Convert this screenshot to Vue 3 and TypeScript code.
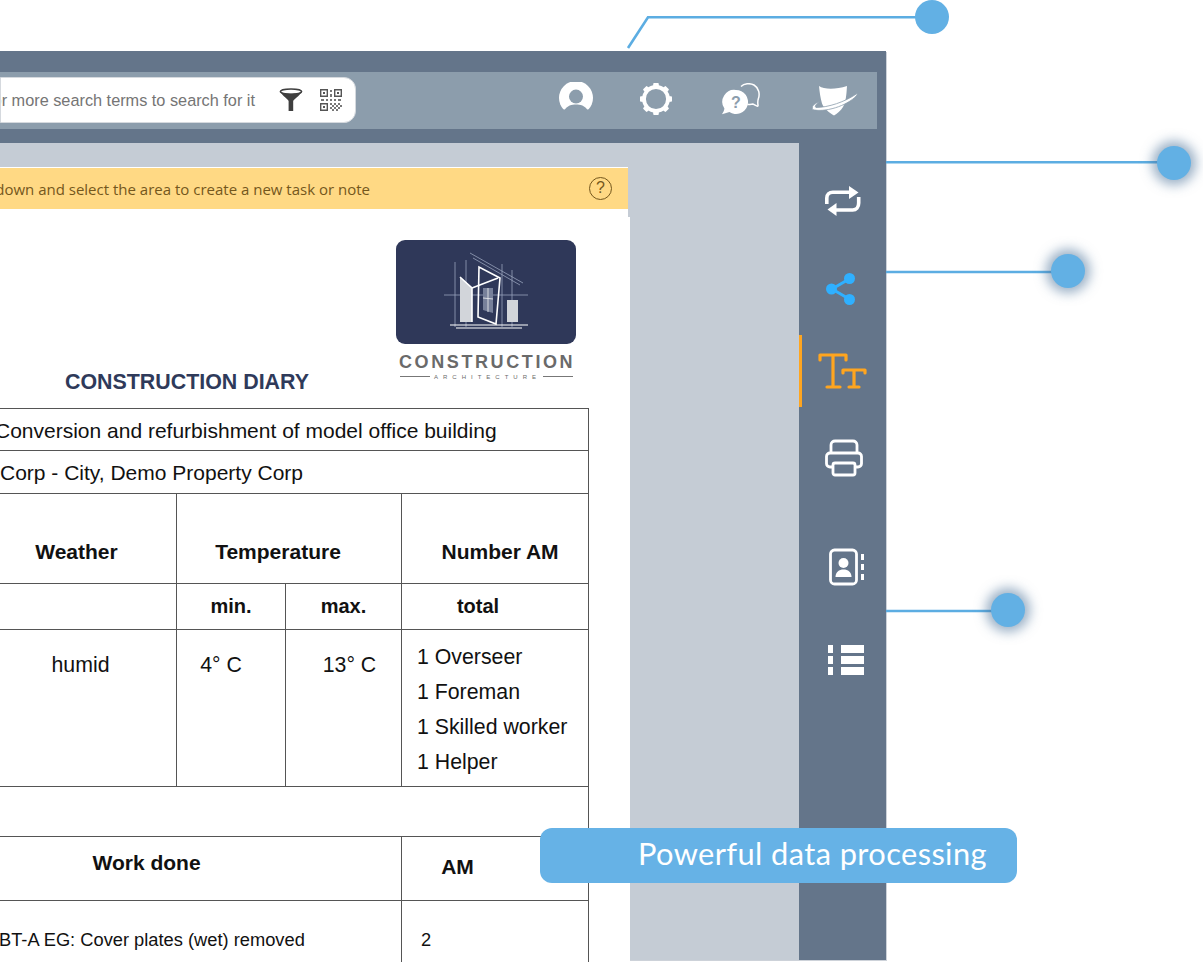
<template>
  <div class="page">
    <div class="frame">
      <header class="toolbar">
        <div class="search">
          <span class="search-text">or more search terms to search for it</span>
          <svg class="funnel" viewBox="0 0 24 24" width="24" height="24">
            <ellipse cx="12" cy="3.6" rx="10.6" ry="2.6" fill="none" stroke="#3f3f3f" stroke-width="1.6" />
            <path d="M1.6 4.6C4 8 8.4 11 9.6 13V23h4.6V13C15.6 11 20 8 22.4 4.6c-3 1.6-17.8 1.6-20.8 0z" fill="#3f3f3f" />
          </svg>
          <svg class="qr" viewBox="0 0 22 22" width="22" height="22">
            <path d="M0 0h8v8H0zM1.4 1.4v5.2h5.2V1.4zM14 0h8v8h-8zm1.4 1.4v5.2h5.2V1.4zM0 14h8v8H0zm1.4 1.4v5.2h5.2v-5.2z" fill="#555" fill-rule="evenodd" />
            <path d="M3 3h2v2H3zM17 3h2v2h-2zM3 17h2v2H3z" fill="#555" />
            <path d="M10 1h2v2h-2zM10 5h2v3h-2zM1 10h3v2H1zM6 10h2v2H6zM10 10h2v2h-2zM14 10h2v2h-2zM18 10h3v2h-3zM10 14h2v2h-2zM14 14h2v2h-2zM18 14h2v2h-2zM12 16h2v2h-2zM16 16h2v2h-2zM20 16h2v2h-2zM10 18h2v2h-2zM14 18h2v2h-2zM18 18h2v2h-2zM12 20h2v2h-2zM16 20h2v2h-2z" fill="#777" />
          </svg>
        </div>
        <div class="top-icons">
          <svg class="ic-user" viewBox="0 0 36 30" width="36" height="30">
            <defs>
              <clipPath id="userClip"><rect x="0" y="0" width="36" height="27.5" /></clipPath>
            </defs>
            <circle cx="18" cy="16" r="17" fill="#fff" clip-path="url(#userClip)" />
            <circle cx="18" cy="14.6" r="7" fill="#8c9dac" />
            <path d="M6 29c3-5.600 8-6.400 12-6.400S27 23.400 30 29z" fill="#8c9dac" />
          </svg>
          <svg class="ic-gear" viewBox="0 0 34 34" width="34" height="34">
            <circle cx="17" cy="17" r="12" fill="none" stroke="#fff" stroke-width="3.800" />
            <g fill="#fff">
              <rect v-for="a in gearTeeth" :key="a" x="14.200" y="1" width="5.600" height="5" rx="1" :transform="`rotate(${a} 17 17)`" />
            </g>
          </svg>
          <svg class="ic-chat" viewBox="0 0 40 32" width="40" height="32">
            <path d="M19 3.500C22 .6 28-.2 32 2c5 3 6 9 4.400 13.600-.6 1.800-1 3-.4 6.400 .2 1.200-.4 1.400-1.400 .8l-3.600-1.800c-2 .6-3.600 .6-5.600 .2" fill="none" stroke="#fff" stroke-width="1.500" />
            <path d="M14 7a12 12 0 1 1-6.600 22L0 31.200c1.200-1.800 2.200-3.600 2.400-5.600A12 12 0 0 1 14 7z" fill="#fff" />
            <text x="14" y="25" class="chat-q">?</text>
          </svg>
          <svg class="ic-shield" viewBox="0 0 48 32" width="48" height="32">
            <path d="M8 1c5 3.600 17 3.600 28 0-.6 9-1 16-4 21-2.400 3.800-6 6.600-9 8.600-4.400-2.600-10-6.600-12-12C9.400 13 8.600 7 8 1z" fill="#fff" />
            <path d="M5 22.500C17 22.500 34 17 46 8.500 48 10.400 34 22.500 14 25 6 26 0 25 1.500 23 .4 20.600 5 18 9 16.500 6 18.500 3 21 5 22.500z" fill="#fff" stroke="#8c9dac" stroke-width="0.800" />
          </svg>
        </div>
      </header>

      <div class="workspace">
        <main class="canvas">
          <div class="notice-wrap">
            <div class="notice">
              <span>down and select the area to create a new task or note</span>
              <i class="help">?</i>
            </div>
          </div>
          <section class="sheet">
            <div class="sheet-head">
              <h1>CONSTRUCTION DIARY</h1>
              <div class="logo">
                <div class="logo-box">
                  <svg viewBox="0 0 180 104" width="180" height="104">
                    <g stroke="#98a2bb" stroke-width="0.800" fill="none">
                      <path d="M74 13l53 30M77 18l47 27M70 20v67M59 22v65M106 24v63M116 30v57M48 55h84" />
                    </g>
                    <path d="M64 37l12 10v35H64zM111 60h11v22h-11z" fill="#d2d5da" />
                    <path d="M87 48h10v25l-10-3z" fill="#77809a" />
                    <path d="M87 58l10 1M92 48v24" stroke="#e3e5ea" stroke-width="0.900" />
                    <g stroke="#fff" fill="none" stroke-width="1.600">
                      <path d="M64 37l12 11v34" />
                      <path d="M83 27l-1 50 18 7 4-46-21-11z" />
                      <path d="M76 48l26-10" />
                    </g>
                    <path d="M54 85h78M60 88h66" stroke="#fff" stroke-width="1.200" />
                  </svg>
                </div>
                <div class="logo-name">CONSTRUCTION</div>
                <div class="logo-sub"><span>ARCHITECTURE</span></div>
              </div>
            </div>

            <table class="diary">
              <colgroup>
                <col style="width: 85px" />
                <col style="width: 200px" />
                <col style="width: 109px" />
                <col style="width: 116px" />
                <col style="width: 187px" />
              </colgroup>
              <tbody>
                <tr class="r-title">
                  <td colspan="5" class="project">Conversion and refurbishment of model office building</td>
                </tr>
                <tr class="r-title2">
                  <td colspan="5" class="project second">Corp - City, Demo Property Corp</td>
                </tr>
                <tr class="r-head">
                  <td class="no-right"></td>
                  <th>Weather</th>
                  <th colspan="2" class="temperature">Temperature</th>
                  <th class="number">Number AM</th>
                </tr>
                <tr class="r-sub">
                  <td class="no-right"></td>
                  <td></td>
                  <th>min.</th>
                  <th>max.</th>
                  <th class="total">total</th>
                </tr>
                <tr class="r-data">
                  <td class="no-right"></td>
                  <td class="humid">humid</td>
                  <td class="temp-min">4° C</td>
                  <td class="temp-max">13° C</td>
                  <td class="crew">
                    <div v-for="w in crew" :key="w">1 {{ w }}</div>
                  </td>
                </tr>
                <tr class="r-gap"><td colspan="5"></td></tr>
                <tr class="r-work">
                  <th colspan="4" class="work">Work done</th>
                  <th class="am">AM</th>
                </tr>
                <tr class="r-item">
                  <td colspan="4" class="item">BT-A EG: Cover plates (wet) removed</td>
                  <td class="qty">2</td>
                </tr>
              </tbody>
            </table>
          </section>
        </main>

        <aside class="sidebar">
          <button class="tool t-repeat">
            <svg viewBox="0 0 36 30" width="36" height="30" fill="none" stroke="#fff" stroke-width="3.600">
              <path d="M1.800 18v-6c0-3.500 2.500-5.800 6-5.800H26" />
              <path d="M33.700 11v6c0 4-2.500 7-6 7H10" />
              <path d="M24 0l9.500 6.500L24 13z" fill="#fff" stroke="none" />
              <path d="M11.500 17L2.500 23.500 11.500 30z" fill="#fff" stroke="none" />
            </svg>
          </button>
          <button class="tool t-share">
            <svg viewBox="0 0 30 32" width="30" height="32">
              <path d="M6 16L24 5.500M6 16l18 10.500" stroke="#2fb0ff" stroke-width="3" />
              <circle cx="5.500" cy="16" r="5.500" fill="#2fb0ff" />
              <circle cx="23.500" cy="5.500" r="5.500" fill="#2fb0ff" />
              <circle cx="23.500" cy="26.500" r="5.500" fill="#2fb0ff" />
            </svg>
          </button>
          <button class="tool t-text active">
            <svg viewBox="0 0 50 36" width="50" height="36" fill="none" stroke="#ffa51f" stroke-width="3.200" stroke-linecap="round" stroke-linejoin="round">
              <path d="M2 7V2h26v5M15 2v32M9 34h13" />
              <path d="M25 20v-3h22v3M36 17v17M31 34h10" />
            </svg>
          </button>
          <button class="tool t-print">
            <svg viewBox="0 0 38 38" width="38" height="38" fill="none" stroke="#fff" stroke-width="2.800" stroke-linejoin="round">
              <path d="M6 14V6c0-2.500 2-4 4-4h18c2 0 4 1.500 4 4v8" />
              <path d="M9 28H5c-2 0-3.500-1.500-3.500-3.500v-7C1.500 15.500 3 14 5 14h28c2 0 3.500 1.500 3.500 3.500v7c0 2-1.500 3.500-3.500 3.500h-4" />
              <rect x="8" y="24" width="22" height="12" rx="2" />
            </svg>
          </button>
          <button class="tool t-contact">
            <svg viewBox="0 0 36 38" width="36" height="38">
              <rect x="1.500" y="2" width="26" height="34" rx="4" fill="none" stroke="#fff" stroke-width="2.800" />
              <circle cx="14.500" cy="15" r="5" fill="#fff" />
              <path d="M6.500 29c0-5 3.500-7.500 8-7.500s8 2.500 8 7.500z" fill="#fff" />
              <path d="M32 6h3v6h-3zM32 16h3v6h-3zM32 26h3v6h-3z" fill="#fff" />
            </svg>
          </button>
          <button class="tool t-list">
            <svg viewBox="0 0 36 30" width="36" height="30" fill="#fff">
              <path d="M0 0h5v8H0zM0 11h5v8H0zM0 22h5v8H0zM13 0h23v8H13zM13 11h23v8H13zM13 22h23v8H13z" />
            </svg>
          </button>
        </aside>
      </div>
    </div>

    <!-- callout lines -->
    <svg class="leaders" width="1203" height="962" fill="none" stroke="#5cade2" stroke-width="2.600">
      <path d="M628 48L648 17.300H920" />
      <path d="M886 162.300H1160" />
      <path d="M886 272H1055" />
      <path d="M886 611H995" />
    </svg>
    <span class="dot d1"></span>
    <span class="dot glow d2"></span>
    <span class="dot glow d3"></span>
    <span class="dot glow d4"></span>
    <div class="banner">Powerful data processing</div>
  </div>
</template>

<script setup lang="ts">
const gearTeeth: number[] = [0, 45, 90, 135, 180, 225, 270, 315];
const crew: string[] = ['Overseer', 'Foreman', 'Skilled worker', 'Helper'];
</script>

<style>
html,
body {
  margin: 0;
  background: #fff;
}
</style>

<style scoped>
.page {
  position: relative;
  box-sizing: border-box;
  width: 1203px;
  height: 962px;
  padding-top: 51px;
  overflow: hidden;
  background: #fff;
  font-family: "Liberation Sans", Arial, sans-serif;
}

.frame {
  box-sizing: border-box;
  width: 886px;
  height: 909px;
  padding-top: 21px;
  background: #64758a;
  box-shadow: 1px 1px 0 #cdd2d9;
}

.toolbar {
  display: flex;
  align-items: center;
  justify-content: space-between;
  height: 57px;
  margin-right: 9px;
  background: #8c9dac;
}

.search {
  box-sizing: border-box;
  display: flex;
  align-items: center;
  justify-content: flex-end;
  width: 356px;
  height: 46px;
  margin-top: -1px;
  padding-right: 13px;
  background: #fff;
  border: 1px solid #d5d9de;
  border-radius: 0 12px 12px 0;
  white-space: nowrap;
  overflow: hidden;
}

.search-text {
  flex: none;
  font-size: 16.300px;
  line-height: 20px;
  color: #757575;
  margin-right: 24px;
}

.funnel {
  flex: none;
  margin-right: 17px;
}

.qr {
  flex: none;
}

.top-icons {
  position: relative;
  width: 321px;
  height: 57px;
}

.top-icons svg {
  position: absolute;
}

.ic-user {
  left: 2px;
  top: 10px;
}

.ic-gear {
  left: 83px;
  top: 10px;
}

.ic-chat {
  left: 166px;
  top: 11px;
}

.ic-shield {
  left: 255px;
  top: 13px;
}

.chat-q {
  font: bold 16px "Liberation Sans", sans-serif;
  fill: #8c9dac;
  text-anchor: middle;
}

.workspace {
  display: flex;
  height: 817px;
  margin-top: 14px;
}

.canvas {
  flex: 1;
  min-width: 0;
  padding-top: 24px;
  background: #c5ccd5;
}

.notice-wrap {
  width: 628px;
  height: 50px;
  padding-top: 1px;
  box-sizing: border-box;
  background: #fff;
}

.notice {
  display: flex;
  align-items: center;
  justify-content: flex-end;
  height: 41px;
  padding-right: 16px;
  background: #ffd984;
  color: #74571c;
  font: 15px "Open Sans", sans-serif;
  white-space: nowrap;
  overflow: hidden;
}

.help {
  flex: none;
  display: block;
  box-sizing: border-box;
  width: 23px;
  height: 23px;
  margin-left: 219px;
  border: 1.500px solid #74571c;
  border-radius: 50%;
  font: 16px/20px "Liberation Sans", sans-serif;
  text-align: center;
}

.sheet {
  width: 630px;
  height: 745px;
  overflow: hidden;
  background: #fff;
}

.sheet-head {
  display: flex;
  height: 191px;
  box-sizing: border-box;
  padding-top: 23px;
}

.sheet-head h1 {
  width: 374px;
  margin: 130px 22px 0 0;
  font-size: 21.400px;
  line-height: 24px;
  color: #2f3a5a;
  text-align: center;
  white-space: nowrap;
}

.logo {
  width: 180px;
}

.logo-box {
  height: 104px;
  background: #2f3859;
  border-radius: 9px;
}

.logo-box svg {
  display: block;
}

.logo-name {
  margin-top: 7px;
  padding-left: 3px;
  font-size: 18px;
  font-weight: bold;
  line-height: 22px;
  color: #6a6a6a;
  letter-spacing: 2.600px;
  white-space: nowrap;
}

.logo-sub {
  display: flex;
  align-items: center;
  justify-content: center;
  height: 9px;
  margin: -1px 3px 0 4px;
  font-size: 6px;
  letter-spacing: 5px;
  color: #6a6a6a;
}

.logo-sub::before,
.logo-sub::after {
  content: "";
  flex: 1;
  height: 1px;
  background: #777;
}

.logo-sub span {
  padding: 0 2px 0 4px;
  white-space: nowrap;
}

.diary {
  table-layout: fixed;
  width: 697px;
  margin-left: -109px;
  border-collapse: collapse;
  color: #111;
}

.diary td,
.diary th {
  padding: 0;
  border: 1.500px solid #555;
  font-size: 21.300px;
  text-align: center;
}

.diary th {
  font-size: 21px;
  font-weight: bold;
}

.r-title {
  height: 42px;
}

.r-title2 {
  height: 43px;
}

.r-head {
  height: 90px;
}

.r-sub {
  height: 46px;
}

.r-data {
  height: 157px;
}

.r-gap {
  height: 50px;
}

.r-work {
  height: 64px;
}

.r-item {
  height: 78px;
}

.diary .project {
  padding: 3px 0 0 103px;
  font-size: 21px;
  text-align: left;
}

.diary .project.second {
  padding: 2px 0 0 108px;
}

.diary .no-right {
  border-right: 0;
}

.r-head th {
  padding-top: 27px;
}

.diary .temperature {
  padding-right: 22px;
}

.diary .number {
  padding-left: 10px;
}

.r-sub th {
  font-size: 20px;
}

.diary .total {
  padding-right: 34px;
}

.diary .humid {
  padding: 0 0 86px 8px;
}

.diary .temp-min,
.diary .temp-max {
  padding-bottom: 86px;
}

.diary .temp-min {
  padding-right: 20px;
}

.diary .temp-max {
  padding-left: 12px;
}

.diary .crew {
  padding: 4px 0 0 15px;
  line-height: 35px;
  text-align: left;
}

.diary .work {
  padding-bottom: 12px;
}

.diary .am {
  padding: 0 75px 3px 0;
}

.diary .item {
  padding-left: 107px;
  border-bottom: 0;
  font-size: 18.300px;
  text-align: left;
}

.diary .qty {
  padding-left: 19px;
  border-bottom: 0;
  font-size: 18.300px;
  text-align: left;
}

.sidebar {
  flex: none;
  display: flex;
  flex-direction: column;
  width: 87px;
  padding-top: 22px;
  box-sizing: border-box;
}

.tool {
  display: flex;
  align-items: center;
  justify-content: center;
  height: 72px;
  padding: 0;
  border: 0;
  background: none;
}

.tool.active {
  box-shadow: inset 3px 0 0 #ffa51f;
}

.t-share {
  margin-top: 16px;
  padding-right: 4px;
}

.t-text {
  margin-top: 10px;
  padding-left: 1px;
}

.t-print {
  margin-top: 15px;
  padding-left: 2px;
}

.t-contact {
  margin-top: 37px;
  padding-left: 9px;
}

.t-list {
  margin-top: 21px;
  padding-left: 6px;
}

.leaders {
  position: absolute;
  left: 0;
  top: 0;
}

.dot {
  position: absolute;
  width: 34px;
  height: 34px;
  border-radius: 50%;
  background: #62b0e4;
}

.glow {
  box-shadow: 0 0 12px 5px rgba(70, 110, 150, 0.55);
}

.d1 {
  left: 915px;
  top: 0;
}

.d2 {
  left: 1157px;
  top: 146px;
}

.d3 {
  left: 1051px;
  top: 254px;
}

.d4 {
  left: 991px;
  top: 593px;
}

.banner {
  position: absolute;
  left: 540px;
  top: 828px;
  box-sizing: border-box;
  width: 477px;
  height: 55px;
  padding-left: 98px;
  border-radius: 12px;
  background: #66b2e6;
  color: #fff;
  font: 30.800px/52px Lato, sans-serif;
  letter-spacing: 0.400px;
  white-space: nowrap;
}
</style>
